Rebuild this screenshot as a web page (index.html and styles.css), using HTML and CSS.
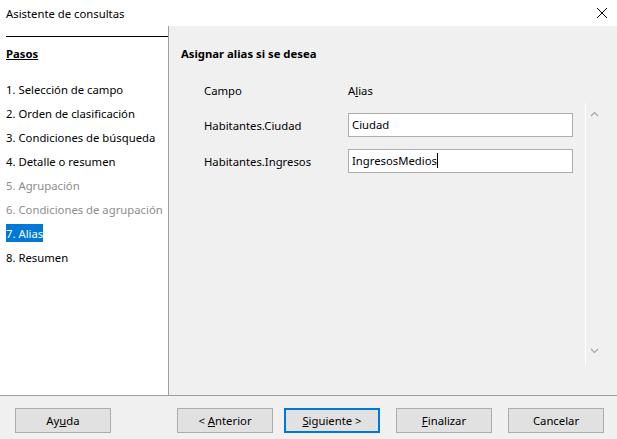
FILE: index.html
```html
<!DOCTYPE html>
<html lang="es">
<head>
    <meta charset="UTF-8">
    <title>Asistente de consultas</title>
    <link rel="stylesheet" href="styles.css">
</head>
<body>
    <div class="dialog">
        <!-- barra de título -->
        <div class="titlebar">
            <span class="title">Asistente de consultas</span>
            <svg class="close" width="12" height="12" viewBox="0 0 12 12">
                <path d="M1 1 L11 11 M11 1 L1 11" stroke="#000" stroke-width="1" fill="none"/>
            </svg>
        </div>

        <div class="main">
            <!-- pasos -->
            <div class="steps">
                <div class="steps-head"><u>Pasos</u></div>
                <ul class="step-list">
                    <li>1. Selección de campo</li>
                    <li>2. Orden de clasificación</li>
                    <li>3. Condiciones de búsqueda</li>
                    <li>4. Detalle o resumen</li>
                    <li class="disabled">5. Agrupación</li>
                    <li class="disabled">6. Condiciones de agrupación</li>
                    <li><span class="current">7. Alias</span></li>
                    <li>8. Resumen</li>
                </ul>
            </div>

            <!-- página actual -->
            <div class="page">
                <div class="page-title">Asignar alias si se desea</div>
                <div class="grid-head">
                    <span class="col-field">Campo</span>
                    <span>A<u>l</u>ias</span>
                </div>
                <div class="scroll-area">
                    <div class="rows">
                        <div class="row">
                            <span class="col-field">Habitantes.Ciudad</span>
                            <div class="input">Ciudad</div>
                        </div>
                        <div class="row">
                            <span class="col-field">Habitantes.Ingresos</span>
                            <div class="input">IngresosMedios<span class="caret"></span></div>
                        </div>
                    </div>
                    <div class="vscroll">
                        <svg width="9" height="6" viewBox="0 0 9 6">
                            <path d="M1 5 L4.5 1.5 L8 5" stroke="#a6a6a6" stroke-width="1.2" fill="none"/>
                        </svg>
                        <svg width="9" height="6" viewBox="0 0 9 6">
                            <path d="M1 1 L4.5 4.5 L8 1" stroke="#a6a6a6" stroke-width="1.2" fill="none"/>
                        </svg>
                    </div>
                </div>
            </div>
        </div>

        <!-- botones -->
        <div class="buttons">
            <button class="btn">Ay<u>u</u>da</button>
            <button class="btn btn-prev">&lt; <u>A</u>nterior</button>
            <button class="btn btn-default"><u>S</u>iguiente &gt;</button>
            <button class="btn btn-gap"><u>F</u>inalizar</button>
            <button class="btn btn-gap">Cancelar</button>
        </div>
    </div>
</body>
</html>
```

FILE: styles.css
```css
body{
    margin: 0;
    font-family: "Noto Sans", "Open Sans", sans-serif;
    font-size: 11.3px;
    color: #000;
}
.dialog{
    width: 617px;
    height: 439px;
    background-color: #f0f0f0;
    display: flex;
    flex-direction: column;
}
.titlebar{
    height: 26px;
    background-color: #fff;
    display: flex;
    align-items: center;
    justify-content: space-between;
    padding: 0 9px 0 6px;
}
.close{
    display: block;
}
.main{
    height: 369px;
    display: flex;
    border-bottom: 1px solid #a0a0a0;
}
.steps{
    width: 162px;
    background-color: #fff;
    border-right: 1px solid #a0a0a0;
    padding: 10px 0 0 6px;
}
.steps-head{
    border-top: 1px solid #000;
    padding-top: 9px;
    font-weight: bold;
    line-height: 16px;
}
.step-list{
    list-style: none;
    margin: 16px 0 0 0;
    padding: 0;
}
.step-list li{
    line-height: 24px;
    white-space: nowrap;
}
.step-list .disabled{
    color: #8d8d8d;
}
.current{
    background-color: #0078d7;
    color: #fff;
    padding: 2px 0 1px;
}
.page{
    flex: 1;
    padding: 20px 15px 0 12px;
    display: flex;
    flex-direction: column;
}
.page-title{
    font-weight: bold;
    line-height: 16px;
}
.grid-head{
    display: flex;
    margin: 21px 0 4px 23px;
    line-height: 16px;
}
.col-field{
    width: 144px;
    flex-shrink: 0;
}
.scroll-area{
    height: 262px;
    display: flex;
}
.rows{
    flex: 1;
    padding: 10px 0 0 23px;
}
.row{
    display: flex;
    align-items: center;
    margin-bottom: 12px;
}
.input{
    width: 217px;
    height: 22px;
    line-height: 22px;
    padding: 0 3px;
    background-color: #fff;
    border: 1px solid #adadad;
}
.caret{
    display: inline-block;
    width: 1px;
    height: 15px;
    background-color: #000;
    vertical-align: -3px;
}
.vscroll{
    width: 17px;
    border-left: 1px solid #fff;
    display: flex;
    flex-direction: column;
    justify-content: space-between;
    align-items: center;
    padding: 8px 0 11px;
    box-sizing: border-box;
}
.vscroll svg{
    display: block;
}
.buttons{
    display: flex;
    padding: 12px 0 0 15px;
}
.btn{
    width: 96px;
    height: 25px;
    font-family: inherit;
    font-size: 11.3px;
    color: #000;
    background-color: #e1e1e1;
    border: 1px solid #adadad;
    padding: 0;
}
.btn-prev{
    margin-left: 66px;
}
.btn-default{
    margin-left: 11px;
    border: 2px solid #0078d7;
}
.btn-gap{
    margin-left: 16px;
}
```
